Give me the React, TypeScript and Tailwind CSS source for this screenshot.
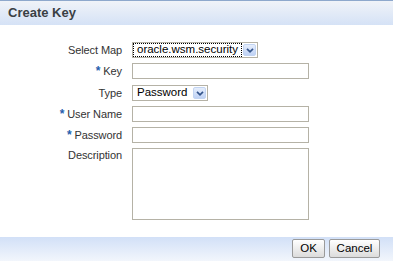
import React from 'react'

const FONT = { fontFamily: '"Liberation Sans", Arial, sans-serif' }

function Chevron() {
  return (
    <svg width="8" height="5" viewBox="0 0 8 5" className="block">
      <path d="M1 0.8 L4 3.8 L7 0.8" fill="none" stroke="#34558c" strokeWidth="1.7" />
    </svg>
  )
}

function SelectBox({ value, width, focused }: { value: string; width: string; focused?: boolean }) {
  return (
    <div className={`flex items-center h-[16px] border border-[#b5b2a6] bg-white ${width}`}>
      <div
        className={`flex-1 h-[14px] flex items-center pl-[3px] text-[11.5px] text-black leading-none ${
          focused ? 'border border-dotted border-black' : 'border border-transparent'
        }`}
      >
        {value}
      </div>
      <div className="w-[13px] h-[12px] mx-[1px] flex items-center justify-center rounded-[2px] border border-[#c2d4f2] bg-gradient-to-b from-[#e6eefc] to-[#bfd2f5]">
        <Chevron />
      </div>
    </div>
  )
}

function Label({ text, required }: { text: string; required?: boolean }) {
  return (
    <div className="w-[122px] text-right text-[11px] text-[#333] leading-[14px] tracking-[-0.1px]">
      {required && <span className="text-[#1f5fae] font-bold text-[12px] mr-[3px]">*</span>}
      {text}
    </div>
  )
}

function Row({ label, required, children, top }: { label: string; required?: boolean; children: React.ReactNode; top: string }) {
  return (
    <div className={`flex items-center gap-[10px] ${top}`}>
      <Label text={label} required={required} />
      {children}
    </div>
  )
}

export default function App() {
  return (
    <div className="w-[393px] h-[261px] bg-white flex flex-col overflow-hidden" style={FONT}>
      {/* Title bar */}
      <div className="h-[25px] border-t border-[#8ea8cc] bg-gradient-to-b from-[#f0f3f8] to-[#d5e2f6] flex items-center px-[8px]">
        <span className="text-[13px] font-bold text-[#3a4044]">Create Key</span>
      </div>

      {/* Form */}
      <div className="flex flex-col">
        <Row label="Select Map" top="mt-[17px]">
          <SelectBox value="oracle.wsm.security" width="w-[126px]" focused />
        </Row>
        <Row label="Key" required top="mt-[5px]">
          <div className="w-[177px] h-[16px] border border-[#b5b2a6] bg-white" />
        </Row>
        <Row label="Type" top="mt-[6px]">
          <SelectBox value="Password" width="w-[76px]" />
        </Row>
        <Row label="User Name" required top="mt-[5px]">
          <div className="w-[177px] h-[16px] border border-[#b5b2a6] bg-white" />
        </Row>
        <Row label="Password" required top="mt-[5px]">
          <div className="w-[177px] h-[16px] border border-[#b5b2a6] bg-white" />
        </Row>
        <div className="flex items-start gap-[10px] mt-[5px]">
          <Label text="Description" />
          <div className="w-[177px] h-[72px] border border-[#b5b2a6] bg-white" />
        </div>
      </div>

      <div className="flex-1" />

      {/* Footer */}
      <div className="h-[24px] bg-gradient-to-b from-[#d2e0f7] to-[#f2f6fc] flex items-start justify-end pt-[2px] pr-[13px] gap-[4px]">
        <button className="w-[33px] h-[19px] border border-[#9a9a9a] rounded-[2px] bg-gradient-to-b from-[#ffffff] to-[#dcdcdc] text-[11.5px] text-black leading-none">
          OK
        </button>
        <button className="w-[51px] h-[19px] border border-[#9a9a9a] rounded-[2px] bg-gradient-to-b from-[#ffffff] to-[#dcdcdc] text-[11.5px] text-black leading-none">
          Cancel
        </button>
      </div>
    </div>
  )
}
